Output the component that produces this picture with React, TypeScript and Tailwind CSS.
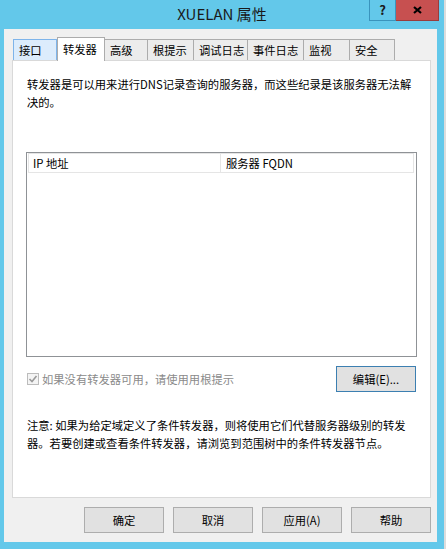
const font = "font-['Noto_Sans_CJK_SC','Noto_Sans',sans-serif]";

const tabsAfter = [
  { label: "高级", w: "w-[43px]" },
  { label: "根提示", w: "w-[46px]" },
  { label: "调试日志", w: "w-[54px]" },
  { label: "事件日志", w: "w-[56px]" },
  { label: "监视", w: "w-[46px]" },
  { label: "安全", w: "w-[45px]" },
];

function DialogButton({ children }: { children: React.ReactNode }) {
  return (
    <button className="flex h-[26px] w-[80px] items-center justify-center border border-[#adadad] bg-[#e1e1e1] text-black">
      {children}
    </button>
  );
}

export default function App() {
  return (
    <div className={`flex h-[549px] w-[446px] bg-[#63c8ea] text-[11.3px] text-black ${font}`}>
      <div className="flex w-[444px] flex-col">
        {/* caption */}
        <div className="relative flex h-[29px] items-center justify-center text-[15px] text-[#1a1a1a]">
          XUELAN 属性
          <div className="absolute right-[5px] top-0 flex">
            <div className="flex h-[21px] w-[27px] items-center justify-center border border-t-0 border-[#3a94bd] text-[13px] font-bold">
              ?
            </div>
            <div className="flex h-[21px] w-[43px] items-center justify-center border border-t-0 border-l-0 border-[#9a3c3c] bg-[#c75050]">
              <svg width="9" height="8" viewBox="0 0 9 8">
                <path d="M1 1 L8 7 M8 1 L1 7" stroke="#000" strokeWidth="2.2" />
              </svg>
            </div>
          </div>
        </div>

        {/* client area */}
        <div className="ml-[4px] flex h-[513px] w-[433px] flex-col bg-[#f0f0f0] pl-[8px] pt-[8px]">
          <div className="relative z-10 -mb-px ml-px flex h-[24px] items-end">
            <div className="mb-px flex h-[21px] w-[44px] items-center border border-b-0 border-[#7eb4ea] bg-[#dcecfc] pl-[5px]">
              接口
            </div>
            <div className="flex h-[24px] w-[48px] items-center border border-b-0 border-[#acacac] bg-white pl-[5px]">
              转发器
            </div>
            {tabsAfter.map((t) => (
              <div
                key={t.label}
                className={`mb-px flex h-[21px] items-center border-r border-t border-[#acacac] bg-[#ececec] pl-[5px] ${t.w}`}
              >
                {t.label}
              </div>
            ))}
          </div>

          <div className="flex h-[438px] w-[419px] flex-col border border-[#d9d9d9] bg-white pl-[14px]">
            <div className="mt-[14px] leading-[18px]">
              <div className="whitespace-nowrap">转发器是可以用来进行DNS记录查询的服务器，而这些纪录是该服务器无法解</div>
              <div className="whitespace-nowrap">决的。</div>
            </div>

            <div className="-ml-px mt-[41px] h-[205px] w-[391px] border border-[#8f9296] bg-white">
              <div className="ml-px flex h-[20px] w-[386px] border border-[#e5e5e5]">
                <div className="flex w-[192px] items-center border-r border-[#e5e5e5] pl-[4px]">IP 地址</div>
                <div className="flex items-center pl-[5px]">服务器 FQDN</div>
              </div>
            </div>

            <div className="mt-[9px] flex h-[26px] w-[389px] items-center justify-between">
              <div className="flex items-center gap-[3px] text-[#8a8a8a]">
                <svg width="12" height="12" viewBox="0 0 12 12">
                  <rect x="0.5" y="0.5" width="11" height="11" fill="#f4f4f4" stroke="#bcbcbc" />
                  <path d="M2.5 6 L5 8.5 L9.5 3" fill="none" stroke="#9a9a9a" strokeWidth="1.6" />
                </svg>
                <span>如果没有转发器可用，请使用用根提示</span>
              </div>
              <button className="flex h-[26px] w-[80px] items-center justify-center border border-[#3c7fb1] bg-[#e1e1e1] text-black">
                编辑(E)...
              </button>
            </div>

            <div className="mt-[24px] leading-[18px]">
              <div className="whitespace-nowrap">注意: 如果为给定域定义了条件转发器，则将使用它们代替服务器级别的转发</div>
              <div className="whitespace-nowrap">器。若要创建或查看条件转发器，请浏览到范围树中的条件转发器节点。</div>
            </div>
          </div>

          <div className="mt-[9px] flex w-[419px] justify-end gap-[9px]">
            <DialogButton>确定</DialogButton>
            <DialogButton>取消</DialogButton>
            <DialogButton>应用(A)</DialogButton>
            <DialogButton>帮助</DialogButton>
          </div>
        </div>
      </div>
      <div className="w-[2px] bg-[#dcdcdc]" />
    </div>
  );
}
